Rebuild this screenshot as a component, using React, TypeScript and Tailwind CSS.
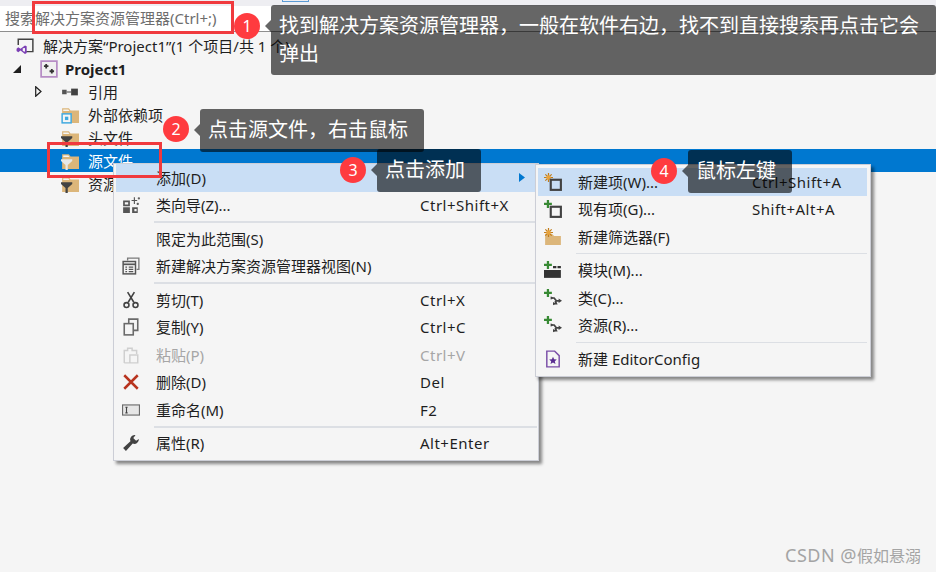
import React from 'react'

const font = { fontFamily: '"Noto Sans", "Noto Sans CJK SC", sans-serif' }

// tree + menu icons, all drawn on a 16 grid
function Icon({ children, size = 18 }: { children: React.ReactNode; size?: number }) {
  return (
    <svg width={size} height={size} viewBox="0 0 16 16" fill="none" className="shrink-0">
      {children}
    </svg>
  )
}

const Folder = ({ children }: { children?: React.ReactNode }) => (
  <Icon>
    <path d="M1 2h6l1.500 2H16v11H1z" fill="#dcb67a" />
    <path d="M2 3h4.500l1 1.500H2z" fill="#f5f5f5" />
    {children}
  </Icon>
)

const Funnel = ({ fill = '#424242' }: { fill?: string }) => (
  <path d="M0 6.500h10v1.500L6 11.500V16H4v-4.500L0 8z" fill={fill} />
)

const NewStar = () => (
  <g>
    <path d="M4 0v8M0 4h8M1.200 1.200l5.600 5.600M6.800 1.200l-5.600 5.600" stroke="#c27d1a" strokeWidth="1.100" />
    <circle cx="4" cy="4" r="2" fill="#e8a33d" />
  </g>
)

const Plus = () => <path d="M3.500 0v7M0 3.500h7" stroke="#388a34" strokeWidth="2" />

const ClassArrows = () => (
  <g>
    <Plus />
    <path d="M6 8h3l2 2.500h3M9 13h2l-1-2.500" stroke="#424242" strokeWidth="1.500" />
    <path d="M6 6.500l2.500 1.500L6 9.500zM13 8.500l3 2-3 2zM8 11.500l2.500 1.500L8 14.500z" fill="#424242" />
  </g>
)

const ItemBox = () => <rect x="6" y="6" width="9" height="9" stroke="#424242" strokeWidth="1.900" />

function TreeRow({
  indent,
  icon,
  label,
  active,
  bold,
  caret,
  gap = 'ml-[9px]',
}: {
  indent: string
  icon: React.ReactNode
  label: string
  active?: boolean
  bold?: boolean
  caret?: React.ReactNode
  gap?: string
}) {
  return (
    <div className={`flex h-[23px] items-center ${active ? 'bg-[#0078d0] text-white' : 'text-[#1e1e1e]'} ${indent}`}>
      {caret}
      {icon}
      <span className={`whitespace-nowrap pt-[2px] text-[15px] ${gap} ${bold ? 'font-bold' : ''}`}>{label}</span>
    </div>
  )
}

function MenuRow({
  icon,
  label,
  shortcut,
  disabled,
  active,
  arrow,
  shortcutLeft,
}: {
  icon?: React.ReactNode
  label: string
  shortcut?: string
  disabled?: boolean
  active?: boolean
  arrow?: boolean
  shortcutLeft: string
}) {
  return (
    <div
      className={`flex h-[27.500px] items-center text-[15px] ${disabled ? 'text-[#a6a6a6]' : 'text-[#1e1e1e]'} ${active ? 'bg-[#c9def5]' : ''}`}
    >
      <div className="flex w-[40px] shrink-0 items-center pl-[6px]">{icon}</div>
      <span className="whitespace-nowrap">{label}</span>
      {shortcut && <span className={`absolute whitespace-nowrap tracking-[0.5px] ${shortcutLeft}`}>{shortcut}</span>}
      {arrow && (
        <svg width="6" height="9" viewBox="0 0 6 9" className="absolute right-[13px]">
          <path d="M0 0l6 4.500L0 9z" fill="#0078d0" />
        </svg>
      )}
    </div>
  )
}

const Sep = ({ thick }: { thick?: boolean }) => (
  <div className={`ml-[38px] bg-[#dcdfe4] ${thick ? 'my-[2px] h-[2px]' : 'my-[2.500px] h-[1px]'}`} />
)

function Note({ n, text, className, circle }: { n: number; text: string; className: string; circle: string }) {
  return (
    <>
      <div className={`absolute flex h-[26px] w-[26px] items-center justify-center rounded-full bg-[#ff3b3f] text-[16px] text-white ${circle}`}>
        {n}
      </div>
      <div className={`absolute rounded-[3px] bg-black/60 text-[20px] leading-[28px] text-white ${className}`}>
        <span className="absolute left-[-6px] top-[15px] h-0 w-0 border-y-[6px] border-r-[6px] border-y-transparent border-r-black/60" />
        {text}
      </div>
    </>
  )
}

export default function App() {
  return (
    <div className="relative h-[572px] w-[936px] overflow-hidden bg-[#f5f5f5]" style={font}>
      {/* top strip and search box */}
      <div className="relative h-[6px] bg-[#eeeef2]">
        <div className="absolute left-[282px] top-0 h-[2px] w-[27px] border-x border-b border-[#5b9bd5]" />
      </div>
      <div className="flex h-[26px] items-center border-b border-[#8e8e8e] bg-white pl-[5px] text-[15px] text-[#6d6d6d]">
        搜索解决方案资源管理器(Ctrl+;)
      </div>

      {/* solution tree */}
      <div className="pt-[2px]">
        <TreeRow
          indent="pl-[16px]"
          label="解决方案“Project1”(1 个项目/共 1 个)"
          icon={
            <Icon>
              <path d="M2 7V2h13v11H9" stroke="#424242" strokeWidth="1.300" />
              <path d="M.5 10.500 2 9l2 1.500L8 7.500l1.500.7v6L8 15l-4-3-2 1.500-1.500-1z" fill="#7b3fb5" />
              <path d="M6 10v2.500L8 13V9.800z" fill="#f5f5f5" />
            </Icon>
          }
        />
        <TreeRow
          indent="pl-[13px]"
          bold
          gap="ml-[7px]"
          label="Project1"
          caret={
            <svg width="8" height="8" viewBox="0 0 8 8" className="mr-[19px] shrink-0">
              <path d="M8 0v8H0z" fill="#1e1e1e" />
            </svg>
          }
          icon={
            <Icon>
              <rect x="1" y="1" width="14" height="14" fill="#f0f0f0" stroke="#b48ac4" strokeWidth="1.500" />
              <path d="M3.500 5.500h4M5.500 3.500v4M8.500 10h4M10.500 8v4" stroke="#333" strokeWidth="1.600" />
            </Icon>
          }
        />
        <TreeRow
          indent="pl-[35px]"
          label="引用"
          caret={
            <svg width="7" height="11" viewBox="0 0 7 11" className="mr-[19px] shrink-0">
              <path d="M.7.700 6 5.500.7 10.300z" stroke="#1e1e1e" strokeWidth="1.200" fill="none" />
            </svg>
          }
          icon={
            <Icon>
              <rect x="1" y="6" width="4" height="4" fill="#555" />
              <path d="M5 8h4" stroke="#555" />
              <rect x="9" y="5" width="6" height="6" fill="#424242" />
            </Icon>
          }
        />
        <TreeRow
          indent="pl-[61px]"
          label="外部依赖项"
          icon={
            <Folder>
              <rect x="1" y="7" width="8" height="8" fill="#f5f5f5" stroke="#3fa9e0" strokeWidth="1.300" />
              <rect x="3.500" y="9.500" width="3" height="3" fill="#3fa9e0" />
            </Folder>
          }
        />
        <TreeRow indent="pl-[61px]" label="头文件" icon={<Folder><Funnel /></Folder>} />
        <TreeRow indent="pl-[61px]" active label="源文件" icon={<Folder><Funnel fill="#e8e8e8" /></Folder>} />
        <TreeRow indent="pl-[61px]" label="资源文件" icon={<Folder><Funnel /></Folder>} />
      </div>

      {/* context menu */}
      <div className="absolute left-[113px] top-[163px] w-[426px] border border-[#ccced6] bg-[#f5f5f5] pb-[3px] pl-[2px] pr-[1px] shadow-[3px_3px_3px_rgba(0,0,0,0.45)]">
        <MenuRow shortcutLeft="left-[306px]" active arrow label="添加(D)" />
        <MenuRow
          shortcutLeft="left-[306px]"
          label="类向导(Z)..."
          shortcut="Ctrl+Shift+X"
          icon={
            <Icon>
              <path d="M1 4h6v5H1zM1 10h6v5H1zM9 10h5v5H9z" fill="#555" />
              <path d="M2.500 5.500h3v2h-3zM11 11.500h2v2h-2z" fill="#f5f5f5" />
              <path d="M11 1v6M8.500 4h5M15 1v2M14 2h2M14 6v2M13 7h2" stroke="#555" />
            </Icon>
          }
        />
        <Sep thick />
        <MenuRow shortcutLeft="left-[306px]" label="限定为此范围(S)" />
        <MenuRow
          shortcutLeft="left-[306px]"
          label="新建解决方案资源管理器视图(N)"
          icon={
            <Icon>
              <path d="M5 3V1h10v10h-2" stroke="#7a7a7a" strokeWidth="1.200" />
              <rect x="1" y="4" width="11" height="11" stroke="#555" strokeWidth="1.300" />
              <path d="M1 6.500h11" stroke="#555" strokeWidth="1.500" />
              <path d="M3 9h1.500M6 9h4M3 11h1.500M6 11h4M3 13h1.500M6 13h4" stroke="#555" />
            </Icon>
          }
        />
        <Sep thick />
        <MenuRow
          shortcutLeft="left-[306px]"
          label="剪切(T)"
          shortcut="Ctrl+X"
          icon={
            <Icon>
              <path d="M5 1l5.500 9M11 1L5.500 10" stroke="#424242" strokeWidth="1.400" />
              <circle cx="4" cy="12.500" r="2.200" stroke="#424242" strokeWidth="1.400" />
              <circle cx="12" cy="12.500" r="2.200" stroke="#424242" strokeWidth="1.400" />
            </Icon>
          }
        />
        <MenuRow
          shortcutLeft="left-[306px]"
          label="复制(Y)"
          shortcut="Ctrl+C"
          icon={
            <Icon>
              <path d="M6 5V1h8v10h-4" stroke="#6a6a6a" strokeWidth="1.400" />
              <rect x="2" y="5" width="8" height="10" stroke="#6a6a6a" strokeWidth="1.400" />
            </Icon>
          }
        />
        <MenuRow
          shortcutLeft="left-[306px]"
          disabled
          label="粘贴(P)"
          shortcut="Ctrl+V"
          icon={
            <Icon>
              <path d="M2 15V4h3V2h4v2h4v3M7 8h7v7H7zM2 15h5" stroke="#cfcfcf" strokeWidth="1.300" />
            </Icon>
          }
        />
        <MenuRow
          shortcutLeft="left-[306px]"
          label="删除(D)"
          shortcut="Del"
          icon={
            <Icon>
              <path d="M2 2l12 12M14 2L2 14" stroke="#b8341f" strokeWidth="2.200" />
            </Icon>
          }
        />
        <MenuRow
          shortcutLeft="left-[306px]"
          label="重命名(M)"
          shortcut="F2"
          icon={
            <Icon>
              <rect x=".5" y="3.500" width="15" height="9" stroke="#6a6a6a" fill="#e6e6e6" />
              <path d="M3 5.500h2M3 10.500h2M4 5.500v5" stroke="#424242" />
            </Icon>
          }
        />
        <Sep thick />
        <MenuRow
          shortcutLeft="left-[306px]"
          label="属性(R)"
          shortcut="Alt+Enter"
          icon={
            <Icon>
              <path d="M15 4.500a4 4 0 0 1-5.500 4L3.500 15 1 12.500l6.500-6A4 4 0 0 1 12 1l-2 2.500 2.500 2.500z" fill="#424242" />
            </Icon>
          }
        />
      </div>

      {/* add submenu */}
      <div className="absolute left-[535px] top-[164px] w-[336px] border border-[#ccced6] bg-[#f5f5f5] py-[3px] pl-[2px] pr-[3px] shadow-[3px_3px_3px_rgba(0,0,0,0.45)]">
        <MenuRow
          shortcutLeft="left-[216px]"
          active
          label="新建项(W)..."
          shortcut="Ctrl+Shift+A"
          icon={
            <Icon>
              <NewStar />
              <ItemBox />
            </Icon>
          }
        />
        <MenuRow
          shortcutLeft="left-[216px]"
          label="现有项(G)..."
          shortcut="Shift+Alt+A"
          icon={
            <Icon>
              <Plus />
              <ItemBox />
            </Icon>
          }
        />
        <MenuRow
          shortcutLeft="left-[216px]"
          label="新建筛选器(F)"
          icon={
            <Icon>
              <path d="M1 5h6l2 2h6v8H1z" fill="#dcb67a" />
              <NewStar />
            </Icon>
          }
        />
        <Sep />
        <MenuRow
          shortcutLeft="left-[216px]"
          label="模块(M)..."
          icon={
            <Icon>
              <Plus />
              <path d="M0 8h15v7H0z" fill="#333" />
              <path d="M8 4.500h3v2H8zM12 4.500h3v2h-3z" fill="#333" />
            </Icon>
          }
        />
        <MenuRow
          shortcutLeft="left-[216px]"
          label="类(C)..."
          icon={
            <Icon>
              <ClassArrows />
            </Icon>
          }
        />
        <MenuRow
          shortcutLeft="left-[216px]"
          label="资源(R)..."
          icon={
            <Icon>
              <ClassArrows />
            </Icon>
          }
        />
        <Sep />
        <MenuRow
          shortcutLeft="left-[216px]"
          label="新建 EditorConfig"
          icon={
            <Icon>
              <path d="M2.500 1h7l4 4v10h-11z" fill="#f5f5f5" stroke="#7b4fa8" strokeWidth="1.300" />
              <path d="M8 6l1 2.300 2.400.2-1.800 1.600.6 2.400L8 11.200l-2.200 1.300.6-2.400-1.800-1.600L7 8.300z" fill="#5a2d91" />
            </Icon>
          }
        />
      </div>

      {/* red highlight boxes */}
      <div className="absolute left-[32px] top-[1px] h-[33px] w-[202px] border-[3px] border-[#f03a3e]" />
      <div className="absolute left-[47px] top-[142px] h-[36px] w-[115px] border-[3px] border-[#f03a3e]" />

      <Note
        n={1}
        circle="left-[234px] top-[13px]"
        className="left-[271px] top-[5px] h-[70px] w-[665px] px-[8px] py-[7px]"
        text="找到解决方案资源管理器，一般在软件右边，找不到直接搜索再点击它会弹出"
      />
      <Note
        n={2}
        circle="left-[163px] top-[116px]"
        className="left-[200px] top-[109px] h-[43px] w-[224px] whitespace-nowrap px-[8px] py-[7px]"
        text="点击源文件，右击鼠标"
      />
      <Note
        n={3}
        circle="left-[340px] top-[157px]"
        className="left-[377px] top-[149px] h-[43px] w-[104px] whitespace-nowrap px-[8px] py-[7px]"
        text="点击添加"
      />
      <Note
        n={4}
        circle="left-[651px] top-[158px]"
        className="left-[688px] top-[150px] h-[43px] w-[104px] whitespace-nowrap px-[8px] py-[7px]"
        text="鼠标左键"
      />

      <div className="absolute right-[15px] top-[542px] text-[16px] text-[#a4a4a4]">
        <span className="text-[18px] tracking-[0.5px]">CSDN @</span>假如悬溺
      </div>
    </div>
  )
}
